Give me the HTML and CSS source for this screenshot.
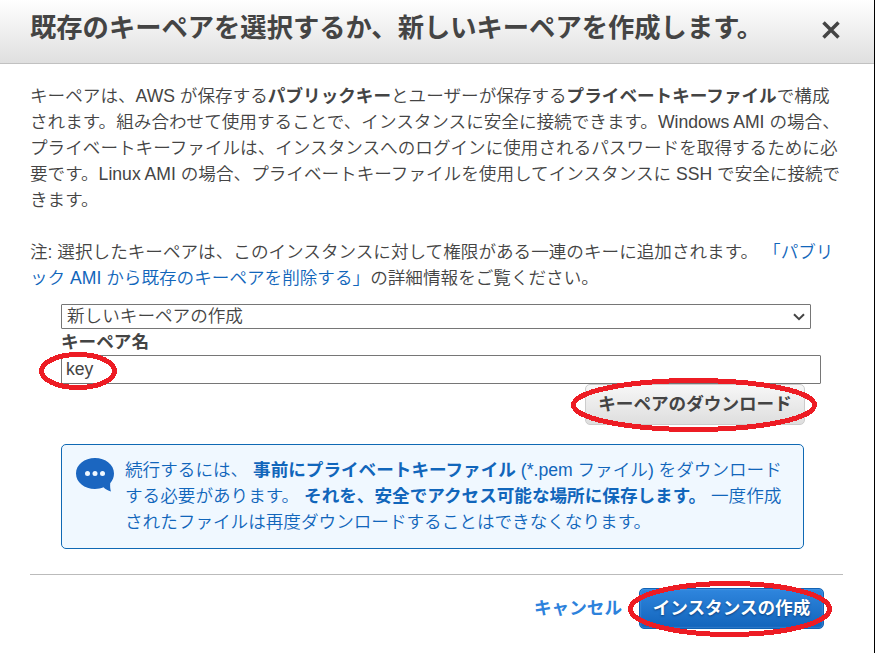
FILE: index.html
```html
<!DOCTYPE html>
<html lang="ja">
<head>
    <meta charset="UTF-8">
    <meta name="viewport" content="width=device-width, initial-scale=1.0">
    <title>キーペアの選択</title>
    <link rel="stylesheet" href="styles.css">
</head>
<body>

    <div class="dialog">
        <div class="dialog-header">
            <h1>既存のキーペアを選択するか、新しいキーペアを作成します。</h1>
            <button class="close-button" aria-label="閉じる">
                <svg width="18" height="18" viewBox="0 0 18 18"><path d="M1.5 1.5L16.5 16.5M16.5 1.5L1.5 16.5"/></svg>
            </button>
        </div>

        <div class="dialog-body">
            <p>キーペアは、AWS が保存する<b>パブリックキー</b>とユーザーが保存する<b>プライベートキーファイル</b>で構成<br>されます。組み合わせて使用することで、インスタンスに安全に接続できます。Windows AMI の場合、<br>プライベートキーファイルは、インスタンスへのログインに使用されるパスワードを取得するために必<br>要です。Linux AMI の場合、プライベートキーファイルを使用してインスタンスに SSH で安全に接続で<br>きます。</p>
            <p class="note">注: 選択したキーペアは、このインスタンスに対して権限がある一連のキーに追加されます。 <a href="#">「パブリ<br>ック AMI から既存のキーペアを削除する」</a>の詳細情報をご覧ください。</p>

            <div class="key-form">
                <div class="select-box">
                    <span>新しいキーペアの作成</span>
                    <svg width="12" height="8" viewBox="0 0 12 8"><path d="M1 1.2L6 6.2L11 1.2"/></svg>
                </div>
                <label for="keyName">キーペア名</label>
                <div class="marked key-name">
                    <input type="text" id="keyName" value="key">
                    <svg class="mark" width="78" height="38"><ellipse cx="39" cy="19" rx="36.5" ry="16.5"/></svg>
                </div>
                <div class="marked download">
                    <button class="download-button">キーペアのダウンロード</button>
                    <svg class="mark" width="246" height="54"><ellipse cx="123" cy="27" rx="120.5" ry="24.5"/></svg>
                </div>
                <div class="info">
                    <svg class="info-icon" width="38" height="34" viewBox="0 0 38 34">
                        <path d="M19 0C8.500 0 0 6.700 0 15.500S8.500 31 19 31C22 31 25 30.400 27.500 29.300C29.500 31.500 32 32.600 35 33.500C34.200 31 34 28.500 34.200 25.200C36.600 22.500 38 19.300 38 15.500C38 6.700 29.500 0 19 0Z"/>
                        <circle cx="11.500" cy="15.500" r="2.500"/>
                        <circle cx="19" cy="15.500" r="2.500"/>
                        <circle cx="26.500" cy="15.500" r="2.500"/>
                    </svg>
                    <p>続行するには、 <b>事前にプライベートキーファイル</b> (*.pem ファイル) をダウンロード<br>する必要があります。 <b>それを、安全でアクセス可能な場所に保存します。</b> 一度作成<br>されたファイルは再度ダウンロードすることはできなくなります。</p>
                </div>
            </div>

            <div class="dialog-footer">
                <a class="cancel" href="#">キャンセル</a>
                <div class="marked launch">
                    <button class="launch-button">インスタンスの作成</button>
                    <svg class="mark" width="204" height="56"><ellipse cx="102" cy="28" rx="99.500" ry="25.500"/></svg>
                </div>
            </div>
        </div>
    </div>

</body>
</html>
```

FILE: styles.css
```css
* {
    box-sizing: border-box;
}

body {
    font-family: "Liberation Sans", "Noto Sans CJK JP", sans-serif;
    font-size: 17.6px;
    font-weight: 350;
    line-height: 26px;
    color: #444;
    margin: 0;
    background: #fff;
    overflow: hidden;
}

b {
    font-weight: bold;
}

a {
    color: #1166bb;
    text-decoration: none;
}

p {
    margin: 0;
    white-space: nowrap;
}

button {
    font-family: inherit;
    font-size: 17.6px;
    font-weight: bold;
    cursor: pointer;
}

.dialog {
    height: 653px;
    border-right: 1px solid #000;
}

.dialog-header {
    display: flex;
    justify-content: space-between;
    height: 64px;
    padding: 0 34px 0 30px;
    background: linear-gradient(#fff, #dfdfdf);
    border-bottom: 1px solid #c1c1c1;
}

.dialog-header h1 {
    margin: 0;
    padding-top: 8px;
    font-size: 26.3px;
    line-height: 40px;
    white-space: nowrap;
}

.close-button {
    width: 18px;
    height: 18px;
    margin-top: 21px;
    padding: 0;
    border: none;
    background: none;
}

.close-button svg {
    display: block;
    fill: none;
    stroke: #444;
    stroke-width: 3.5;
}

.dialog-body {
    padding: 19px 31px 0 30px;
}

.note {
    margin-top: 26px;
}

.key-form {
    display: flex;
    flex-direction: column;
    margin: 13px 0 0 31px;
}

.select-box {
    display: flex;
    justify-content: space-between;
    align-items: center;
    width: 750px;
    height: 25px;
    padding: 0 5px;
    border: 1px solid #767676;
    border-radius: 1px;
    line-height: 23px;
}

.select-box svg {
    fill: none;
    stroke: #444;
    stroke-width: 2;
}

.key-form label {
    font-weight: bold;
}

.marked {
    position: relative;
}

/* red pen circles drawn over the controls */
.mark {
    position: absolute;
    fill: none;
    stroke: #ed1c24;
    stroke-width: 5;
    shape-rendering: crispEdges;
    pointer-events: none;
}

.key-name {
    width: 760px;
    height: 29px;
}

.key-name .mark {
    left: -22px;
    top: -3px;
}

.key-name input {
    display: block;
    width: 100%;
    height: 29px;
    padding: 0 4px;
    border: 1px solid #767676;
    border-radius: 1px;
    font-family: inherit;
    font-size: 17.6px;
    color: #444;
}

.download {
    width: 220px;
    margin-left: 524px;
}

.download .mark {
    left: -14px;
    top: -6px;
}

.download-button {
    display: block;
    width: 220px;
    height: 41px;
    padding: 0 0 5px;
    border: 1px solid #ccc;
    border-radius: 5px;
    background: linear-gradient(#f7f7f7, #dedede);
    color: #444;
}

.info {
    display: flex;
    gap: 11px;
    width: 743px;
    height: 105px;
    margin-top: 19px;
    padding: 12px 14px;
    border: 1px solid #0f69b4;
    border-radius: 5px;
    background: #f0f8ff;
    color: #1166bb;
}

.info-icon {
    flex: none;
    margin-top: 1px;
    fill: #1b66c0;
}

.info-icon circle {
    fill: #f0f8ff;
}

.dialog-footer {
    display: flex;
    justify-content: flex-end;
    margin-top: 25px;
    padding: 13px 19px 0 0;
    border-top: 1px solid #bbb;
}

.cancel {
    margin-right: 17px;
    line-height: 41px;
    font-weight: bold;
    color: #2d82dc;
}

.launch .mark {
    left: -11px;
    top: -7px;
}

.launch-button {
    display: block;
    width: 185px;
    height: 41px;
    padding: 0 0 4px;
    border: 1px solid #1163b5;
    border-radius: 5px;
    background: linear-gradient(#2f86de, #1264bb);
    box-shadow: inset 0 0 2px #6aa9e6;
    color: #fff;
    text-shadow: 0 1px 2px #0a3f7c;
}
```
